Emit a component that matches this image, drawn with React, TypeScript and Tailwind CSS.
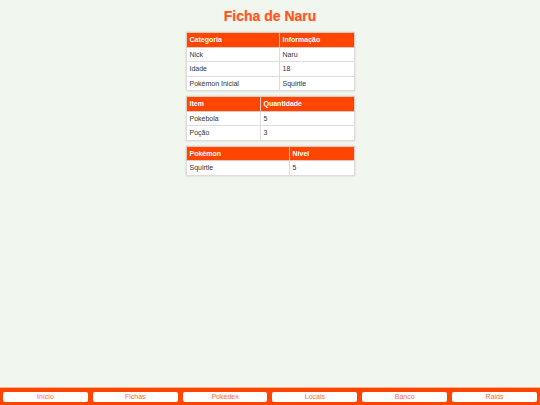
import React from "react";

type Row = [string, string];

function Table({ head, rows, col1 }: { head: Row; rows: Row[]; col1: string }) {
  return (
    <table className="w-[169px] border-collapse bg-white text-[7px] leading-none shadow-[0_0_2px_rgba(0,0,0,0.15)]">
      <thead>
        <tr className="bg-[#ff4500] text-white">
          <th className={`${col1} h-[14.5px] border border-[#e3c9bf] px-[3px] py-0 text-left font-bold`}>{head[0]}</th>
          <th className="h-[14.5px] border border-[#e3c9bf] px-[3px] py-0 text-left font-bold">{head[1]}</th>
        </tr>
      </thead>
      <tbody>
        {rows.map((r, i) => (
          <tr key={i} className="text-[#333]">
            <td className="h-[14.5px] border border-[#ddd] px-[3px] py-0">{r[0]}</td>
            <td className="h-[14.5px] border border-[#ddd] px-[3px] py-0">{r[1]}</td>
          </tr>
        ))}
      </tbody>
    </table>
  );
}

export default function App() {
  const nav = ["Início", "Fichas", "Pokédex", "Locais", "Banco", "Raids"];
  return (
    <div className="flex h-[405px] w-[540px] flex-col bg-[#f1f6ef] font-['Liberation_Sans',Arial,sans-serif]">
      <div className="flex flex-1 flex-col items-center">
        <h1 className="mt-[8px] mb-[8px] text-[14px] font-bold leading-[16px] text-[#ff5722] [text-shadow:0_0_1px_rgba(255,87,34,0.4)]">
          Ficha de Naru
        </h1>
        <div className="flex flex-col gap-[5px]">
          <Table
            head={["Categoria", "Informação"]}
            col1="w-[93px]"
            rows={[
              ["Nick", "Naru"],
              ["Idade", "18"],
              ["Pokémon Inicial", "Squirtle"],
            ]}
          />
          <Table
            head={["Item", "Quantidade"]}
            col1="w-[74px]"
            rows={[
              ["Pokébola", "5"],
              ["Poção", "3"],
            ]}
          />
          <Table head={["Pokémon", "Nível"]} col1="w-[103px]" rows={[["Squirtle", "5"]]} />
        </div>
      </div>
      <div className="flex h-[18px] items-center gap-[5px] border-t border-[#ffb08f] bg-[#ff4500] px-[3px]">
        {nav.map((n) => (
          <div
            key={n}
            className="flex h-[10px] flex-1 items-center justify-center rounded-[2px] bg-white text-[7px] leading-none text-[#ff6a3d]"
          >
            {n}
          </div>
        ))}
      </div>
    </div>
  );
}
